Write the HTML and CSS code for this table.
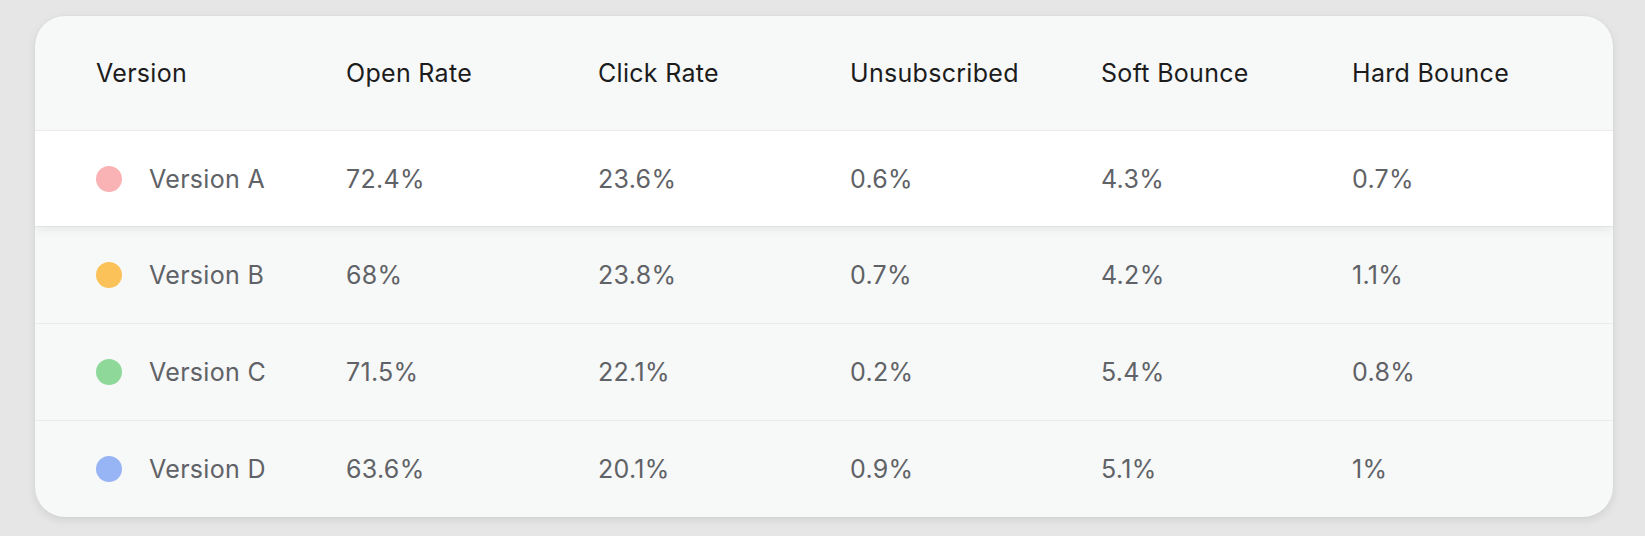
FILE: index.html
```html
<!DOCTYPE html>
<html>

<head>
  <title>A/B Test Results</title>
  <link rel="stylesheet" href="styles.css">
</head>

<body>
  <div class="card">
    <div class="row head">
      <div class="cell">Version</div>
      <div class="cell">Open Rate</div>
      <div class="cell">Click Rate</div>
      <div class="cell">Unsubscribed</div>
      <div class="cell">Soft Bounce</div>
      <div class="cell">Hard Bounce</div>
    </div>

    <div class="row active">
      <div class="cell name"><span class="dot pink"></span>Version A</div>
      <div class="cell">72.4%</div>
      <div class="cell">23.6%</div>
      <div class="cell">0.6%</div>
      <div class="cell">4.3%</div>
      <div class="cell">0.7%</div>
    </div>

    <div class="row">
      <div class="cell name"><span class="dot yellow"></span>Version B</div>
      <div class="cell">68%</div>
      <div class="cell">23.8%</div>
      <div class="cell">0.7%</div>
      <div class="cell">4.2%</div>
      <div class="cell">1.1%</div>
    </div>

    <div class="row">
      <div class="cell name"><span class="dot green"></span>Version C</div>
      <div class="cell">71.5%</div>
      <div class="cell">22.1%</div>
      <div class="cell">0.2%</div>
      <div class="cell">5.4%</div>
      <div class="cell">0.8%</div>
    </div>

    <div class="row">
      <div class="cell name"><span class="dot blue"></span>Version D</div>
      <div class="cell">63.6%</div>
      <div class="cell">20.1%</div>
      <div class="cell">0.9%</div>
      <div class="cell">5.1%</div>
      <div class="cell">1%</div>
    </div>
  </div>
</body>

</html>
```

FILE: styles.css
```css
* {
  margin: 0;
  padding: 0;
  box-sizing: border-box;
}

body {
  font-family: 'Inter', 'Roboto', sans-serif;
  background-color: #e6e6e6;
  padding: 16px 32px 18px 35px;
}

.card {
  background-color: #f7f8f8;
  border-radius: 30px;
  overflow: hidden;
  box-shadow: 0 3px 10px rgba(0, 0, 0, 0.09), 0 0 2px rgba(0, 0, 0, 0.05);
}

.row {
  display: grid;
  grid-template-columns: 250px 252px 252px 251px 251px 1fr;
  align-items: center;
  height: 97px;
  padding-left: 61px;
  font-size: 25px;
  letter-spacing: 0.3px;
  color: #5f6266;
  border-top: 1px solid #ebeced;
}

.row.head {
  height: 114px;
  color: #1c1c1c;
  border-top: none;
}

.row.active {
  position: relative;
  z-index: 1;
  height: 96px;
  background-color: #fff;
  border-top: 1px solid #ececec;
  box-shadow: 0 5px 10px rgba(0, 0, 0, 0.06);
}

.name {
  display: flex;
  align-items: center;
}

.dot {
  width: 26px;
  height: 26px;
  border-radius: 50%;
  margin-right: 27px;
}

.pink {
  background-color: #f9b3b5;
}

.yellow {
  background-color: #fbc25a;
}

.green {
  background-color: #8ed99a;
}

.blue {
  background-color: #97b5f5;
}
```
